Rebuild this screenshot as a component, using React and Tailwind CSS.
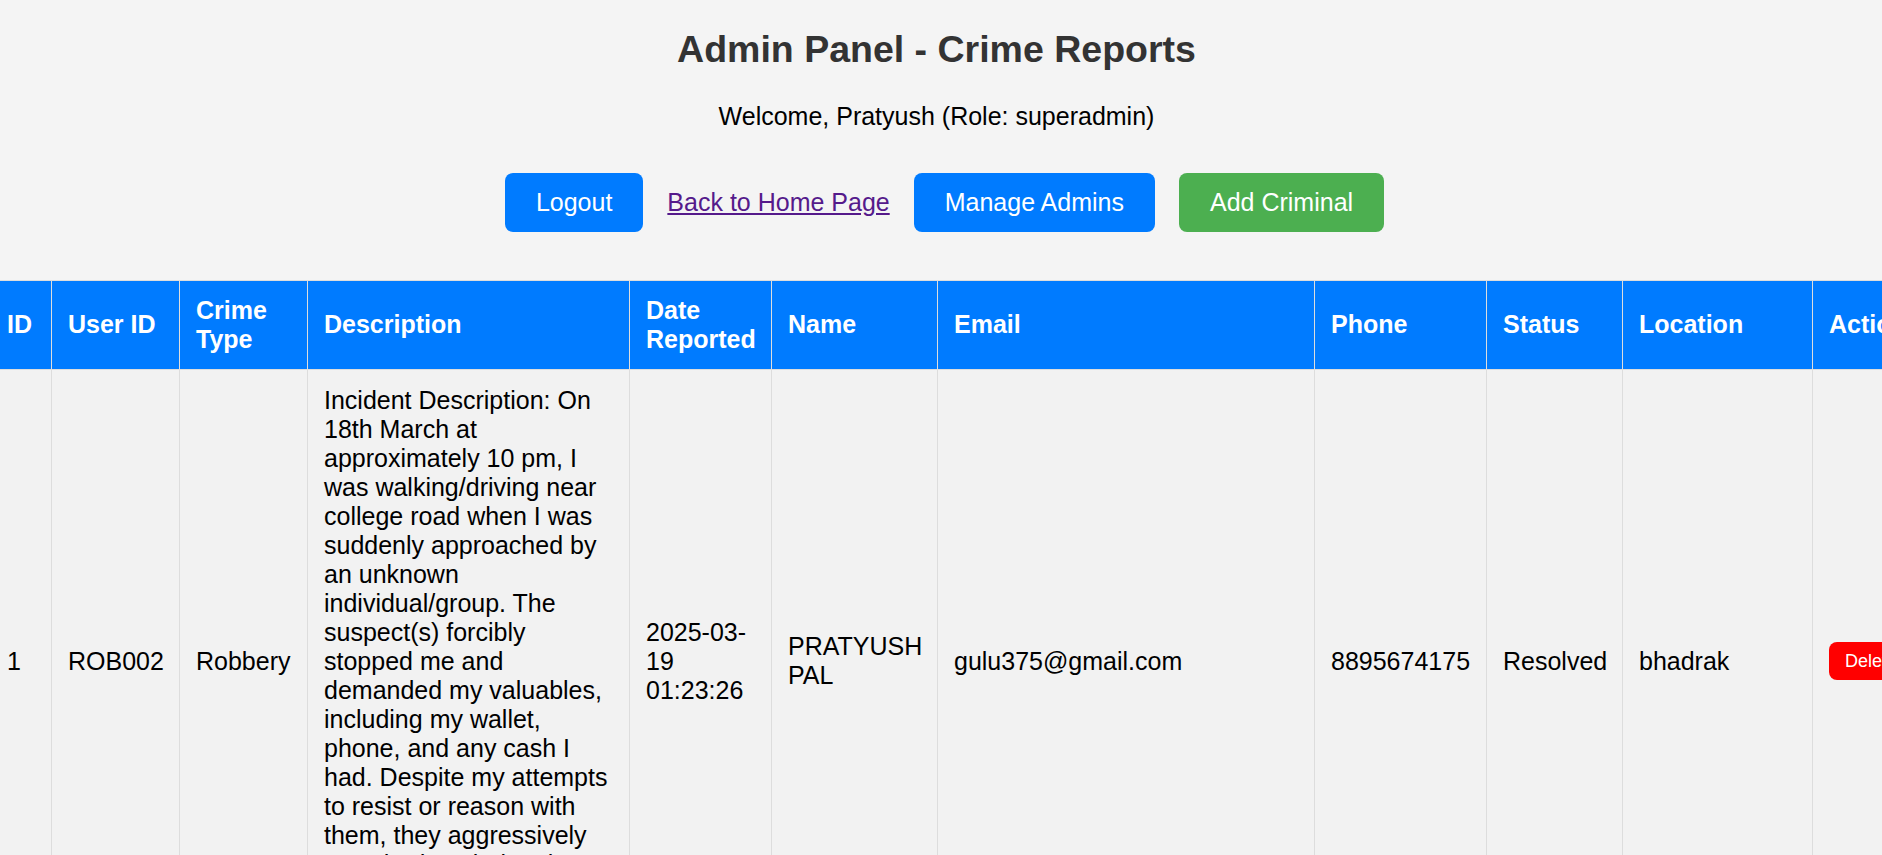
import React from "react";

const desc =
  "Incident Description: On 18th March at approximately 10 pm, I was walking/driving near college road when I was suddenly approached by an unknown individual/group. The suspect(s) forcibly stopped me and demanded my valuables, including my wallet, phone, and any cash I had. Despite my attempts to resist or reason with them, they aggressively snatched my belongings and fled the scene on a motorcycle.";

export default function App() {
  return (
    <div className="h-[855px] w-[1882px] overflow-hidden bg-[#f4f4f4] font-['Liberation_Sans',Arial,sans-serif] text-[25px] leading-[28.75px] text-black">
      <div className="pr-[9px]">
        <h1 className="pt-[28px] text-center text-[37.5px] leading-[43px] font-bold text-[#333333]">
          Admin Panel - Crime Reports
        </h1>
        <p className="mt-[31px] text-center">Welcome, Pratyush (Role: superadmin)</p>
        <div className="mt-[42px] flex items-center justify-center gap-[24px] pl-[16px]">
          <button className="h-[59px] rounded-[8px] bg-[#007bff] px-[31px] text-white">Logout</button>
          <a href="#" className="text-[#551a8b] underline">Back to Home Page</a>
          <button className="h-[59px] rounded-[8px] bg-[#007bff] px-[31px] text-white">Manage Admins</button>
          <button className="h-[59px] rounded-[8px] bg-[#4caf50] px-[31px] text-white">Add Criminal</button>
        </div>
      </div>
      <div className="mt-[48px] w-[1882px] overflow-hidden leading-[29px]">
        <table className="ml-[-10px] w-[2022px] table-fixed border-collapse">
          <colgroup>
            <col className="w-[61px]" />
            <col className="w-[128px]" />
            <col className="w-[128px]" />
            <col className="w-[322px]" />
            <col className="w-[142px]" />
            <col className="w-[166px]" />
            <col className="w-[377px]" />
            <col className="w-[172px]" />
            <col className="w-[136px]" />
            <col className="w-[190px]" />
            <col className="w-[200px]" />
          </colgroup>
          <thead>
            <tr className="bg-[#007bff] text-left font-bold text-white">
              <th className="border border-[#dddddd] px-[16px] py-[15px] align-middle">ID</th>
              <th className="border border-[#dddddd] px-[16px] py-[15px] align-middle">User ID</th>
              <th className="border border-[#dddddd] px-[16px] py-[15px] align-middle">Crime Type</th>
              <th className="border border-[#dddddd] px-[16px] py-[15px] align-middle">Description</th>
              <th className="border border-[#dddddd] px-[16px] py-[15px] align-middle">Date Reported</th>
              <th className="border border-[#dddddd] px-[16px] py-[15px] align-middle">Name</th>
              <th className="border border-[#dddddd] px-[16px] py-[15px] align-middle">Email</th>
              <th className="border border-[#dddddd] px-[16px] py-[15px] align-middle">Phone</th>
              <th className="border border-[#dddddd] px-[16px] py-[15px] align-middle">Status</th>
              <th className="border border-[#dddddd] px-[16px] py-[15px] align-middle">Location</th>
              <th className="border border-[#dddddd] px-[16px] py-[15px] align-middle">Actions</th>
            </tr>
          </thead>
          <tbody>
            <tr className="bg-[#f2f2f2]">
              <td className="border border-[#dddddd] p-[16px] align-middle">1</td>
              <td className="border border-[#dddddd] p-[16px] align-middle">ROB002</td>
              <td className="border border-[#dddddd] p-[16px] align-middle">Robbery</td>
              <td className="border border-[#dddddd] p-[16px] align-middle">{desc}</td>
              <td className="border border-[#dddddd] p-[16px] align-middle">2025-03-19 01:23:26</td>
              <td className="border border-[#dddddd] p-[16px] align-middle">PRATYUSH PAL</td>
              <td className="border border-[#dddddd] p-[16px] align-middle">gulu375@gmail.com</td>
              <td className="border border-[#dddddd] p-[16px] align-middle">8895674175</td>
              <td className="border border-[#dddddd] p-[16px] align-middle">Resolved</td>
              <td className="border border-[#dddddd] p-[16px] align-middle">bhadrak</td>
              <td className="border border-[#dddddd] p-[16px] align-middle">
                <button className="rounded-[8px] bg-[#ff0000] px-[16px] py-[8.5px] text-[18px] leading-[21px] text-white">
                  Delete
                </button>
              </td>
            </tr>
          </tbody>
        </table>
      </div>
    </div>
  );
}
